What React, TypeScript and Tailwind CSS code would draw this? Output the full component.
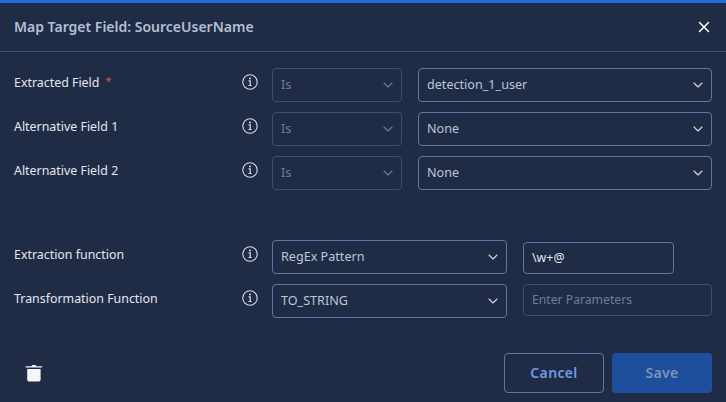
import { ChevronDown, X } from "lucide-react";

function InfoIcon() {
  return (
    <svg width="16" height="16" viewBox="0 0 16 16" fill="none" className="shrink-0 -mt-[2px] text-[#d5dbe8]">
      <circle cx="8" cy="8" r="7.2" stroke="currentColor" strokeWidth="1.1" />
      <circle cx="8" cy="4.6" r="1" fill="currentColor" />
      <path d="M6.6 6.9H8.2V11.4M6.5 11.5H9.6" stroke="currentColor" strokeWidth="1.2" />
    </svg>
  );
}

function TrashIcon() {
  return (
    <svg width="18" height="18" viewBox="0 0 18 18" fill="#f4f6fa">
      <path d="M6.6 2.2C6.8 1.4 7.4 1 8 1H10C10.6 1 11.2 1.4 11.4 2.2H16.6C17 2.2 17.3 2.5 17.3 2.8C17.3 3.2 17 3.5 16.6 3.5H1.2C.8 3.5.5 3.2.5 2.8C.5 2.5.8 2.2 1.2 2.2Z" />
      <path d="M2.2 5H15.6V15.2C15.6 16.6 14.6 17.5 13.3 17.5H4.5C3.2 17.5 2.2 16.6 2.2 15.2Z" />
    </svg>
  );
}

function Select({ value, width, disabled }: { value: string; width: string; disabled?: boolean }) {
  return (
    <div
      className={`${width} h-[34px] shrink-0 flex items-center justify-between pl-2 pr-[5px] rounded-[4px] border ${
        disabled ? "border-[#3f4d70] text-[#6f7c98]" : "border-[#5f75a6] text-[#bcc6d9]"
      }`}
    >
      <span className="text-[12.6px] pt-px">{value}</span>
      <ChevronDown size={16} strokeWidth={1.6} className={disabled ? "text-[#6f7c98]" : "text-[#d5dbe8]"} />
    </div>
  );
}

function Label({ text, required }: { text: string; required?: boolean }) {
  return (
    <div className="w-[228px] shrink-0 flex items-center gap-1.5 text-[12.4px] text-[#e3e7ef]">
      <span>{text}</span>
      {required && <span className="text-[#d9534f] text-[11px] -mt-1">*</span>}
    </div>
  );
}

function FieldRow({ label, value, required }: { label: string; value: string; required?: boolean }) {
  return (
    <div className="flex items-start">
      <div className="flex items-center h-[30px]">
        <Label text={label} required={required} />
        <InfoIcon />
      </div>
      <div className="flex gap-4 ml-3.5">
        <Select value="Is" width="w-[130px]" disabled />
        <Select value={value} width="w-[294px]" />
      </div>
    </div>
  );
}

export default function App() {
  return (
    <div
      className="w-[726px] h-[402px] bg-[#202c46] flex flex-col overflow-hidden border-t-[3px] border-[#1f6ee0]"
      style={{ fontFamily: '"Noto Sans", "Open Sans", sans-serif' }}
    >
      <div className="h-[49px] shrink-0 flex items-center justify-between pl-[14px] pr-[13px] border-b border-[#3f4d70]">
        <h1 className="text-sm font-semibold text-[#b4bfd4]">Map Target Field: SourceUserName</h1>
        <X size={18} strokeWidth={2} className="text-white" />
      </div>

      <div className="pl-[14px] pt-4 flex flex-col gap-2.5">
        <FieldRow label="Extracted Field" value="detection_1_user" required />
        <FieldRow label="Alternative Field 1" value="None" />
        <FieldRow label="Alternative Field 2" value="None" />
      </div>

      <div className="pl-[14px] mt-[50px] flex flex-col gap-2.5">
        <div className="flex items-start">
          <div className="flex items-center h-[30px]">
            <Label text="Extraction function" />
            <InfoIcon />
          </div>
          <div className="ml-3.5">
            <Select value="RegEx Pattern" width="w-[235px]" />
          </div>
          <div className="ml-4 mt-0.5 w-[151px] h-8 flex items-center px-2 rounded-[4px] border border-[#5f75a6] text-[12.4px] text-[#e3e7ef]">
            \w+@
          </div>
        </div>
        <div className="flex items-start">
          <div className="flex items-center h-[30px]">
            <Label text="Transformation Function" />
            <InfoIcon />
          </div>
          <div className="ml-3.5">
            <Select value="TO_STRING" width="w-[235px]" />
          </div>
          <div className="ml-4 w-[189px] h-8 flex items-center px-2 rounded-[4px] border border-[#3f4d70] text-[12.2px] text-[#6f7c98]">
            Enter Parameters
          </div>
        </div>
      </div>

      <div className="mt-[35px] pl-[25px] pr-[14px] flex items-center justify-between">
        <TrashIcon />
        <div className="flex gap-2">
          <button className="w-[100px] h-10 rounded-[4px] border border-[#5f75a6] text-sm font-semibold tracking-wide text-[#6f9ae0]">
            Cancel
          </button>
          <button className="w-[100px] h-10 rounded-[4px] bg-[#1e4f9c] text-sm font-semibold tracking-wide text-[#7f93b8]">
            Save
          </button>
        </div>
      </div>
    </div>
  );
}
